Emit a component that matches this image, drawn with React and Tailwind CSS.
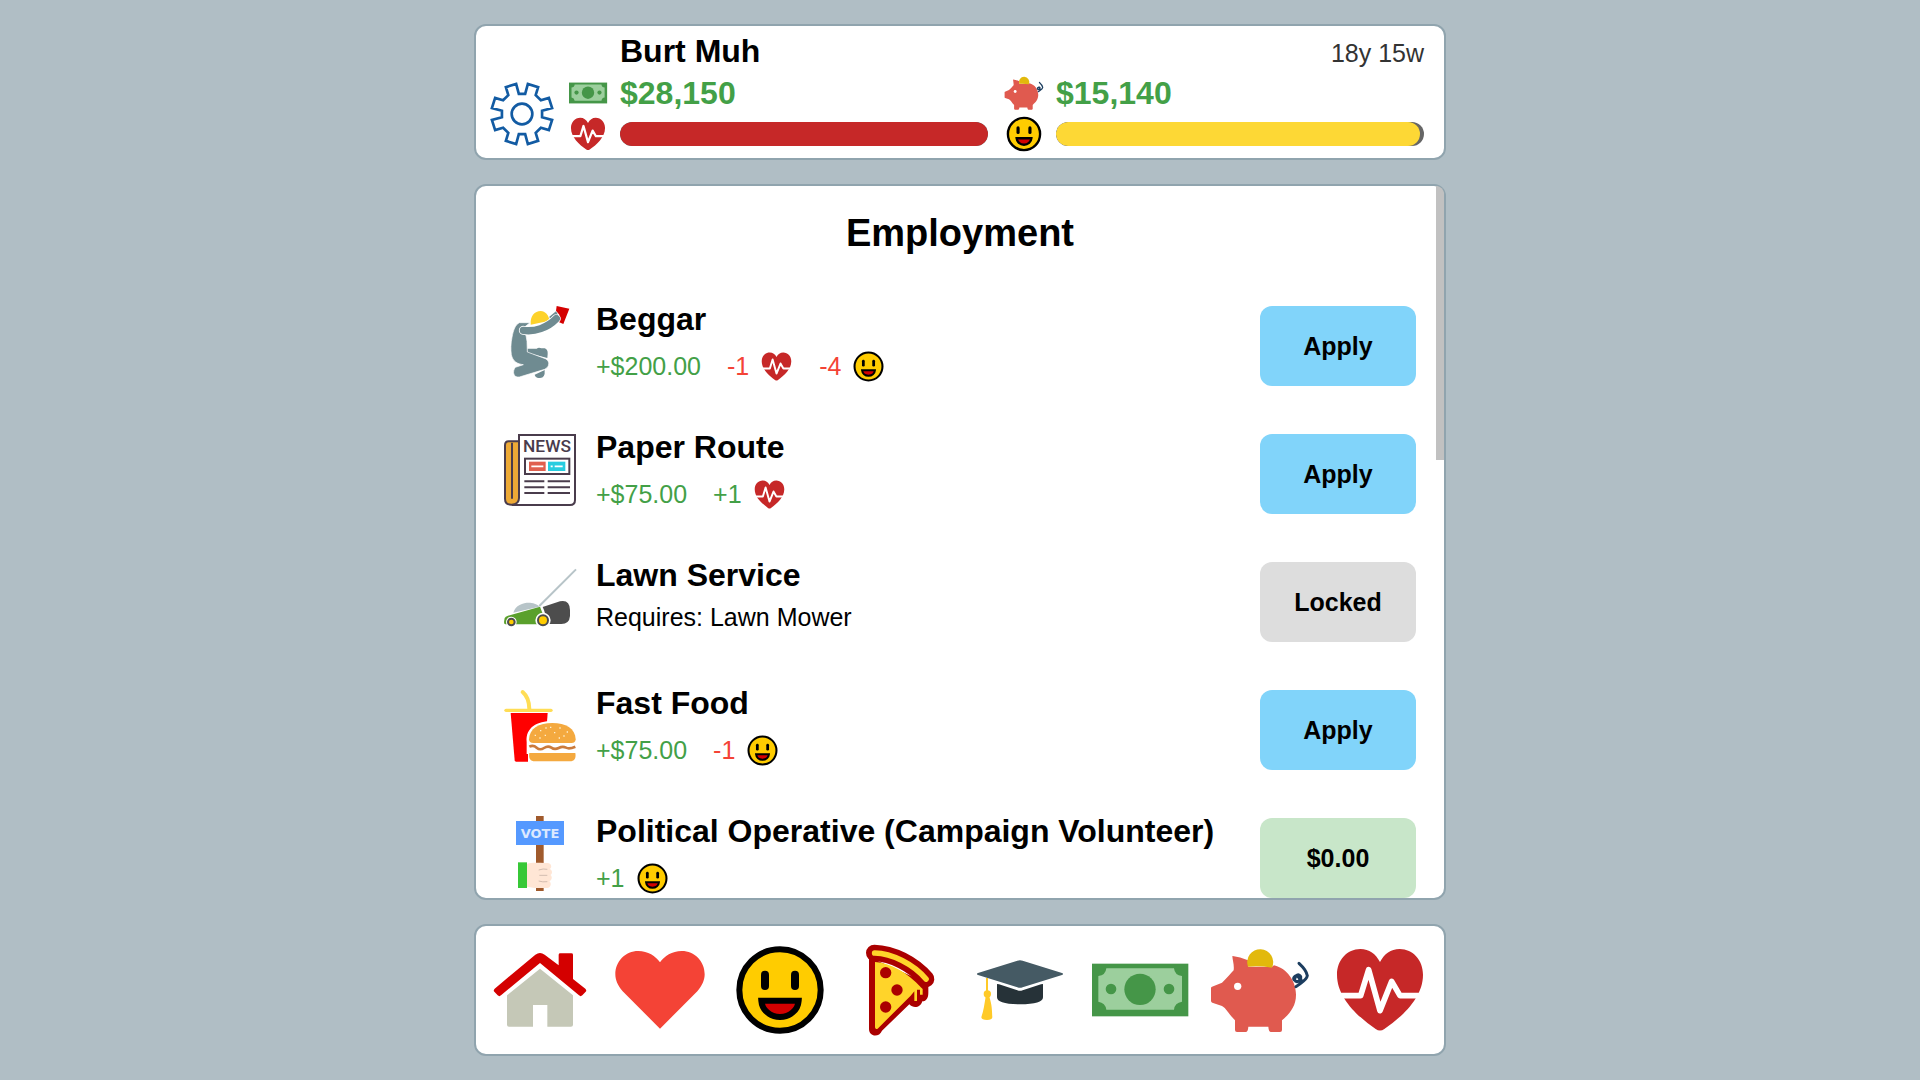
import React from 'react';

const Icon = ({ className, size = 288, children }) => (
  <svg viewBox={`0 0 ${size} ${size}`} className={`shrink-0 overflow-visible ${className}`} aria-hidden="true">
    {children}
  </svg>
);

const HomeIcon = ({ className }) => (
  <Icon className={className}>
    <path
      d="M8 140 L130 38 Q144 28 158 38 L200 70 V38 Q200 34 205 34 H238 Q243 34 243 38 V111 L280 140 Q285 145 281 149 L271 160 Q266 165 261 160 L144 63 L27 160 Q22 165 17 160 L7 149 Q3 145 8 140Z"
      fill="#d40000"
    />
    <path d="M144 80 L243 160 V248 Q243 254 237 254 H166 V189 H123 V254 H51 Q45 254 45 248 V160Z" fill="#c5c8b7" />
  </Icon>
);

const HeartIcon = ({ className }) => (
  <Icon className={className}>
    <path
      d="M144 260 L32 148 C16 130 10 112 10 97 C10 58 40 27 79 27 C108 27 131 42 144 61 C157 42 180 27 209 27 C248 27 278 58 278 97 C278 112 272 130 256 148Z"
      fill="#f44336"
    />
  </Icon>
);

const SmileIcon = ({ className }) => (
  <Icon className={className}>
    <circle cx="144" cy="144" r="122" fill="#ffcc00" stroke="#000" strokeWidth="18" />
    <rect x="87" y="86" width="24" height="58" rx="12" />
    <rect x="177" y="86" width="24" height="58" rx="12" />
    <path d="M88 176 H200 C198 204 174 225 144 225 S90 204 88 176Z" fill="#d40000" stroke="#000" strokeWidth="18" />
  </Icon>
);

const PizzaIcon = ({ className }) => (
  <Icon className={className}>
    <path
      d="M51 45 V261 C51 285 82 287 90 266 L172 187 C184 201 206 197 211 178 C224 177 229 167 229 152 V125Z"
      fill="#aa0000"
    />
    <path d="M67 33 C120 34 184 66 222 111" fill="none" stroke="#aa0000" strokeWidth="50" strokeLinecap="round" />
    <path d="M68 33 C120 34 184 66 222 111" fill="none" stroke="#ffd42a" strokeWidth="17" strokeLinecap="round" />
    <path
      d="M69 60 C120 64 165 92 208 137 L212 141 V158 H204 V143 L195 143 V177 H187 V148 L176 161 L77 260 Q70 264 69 256Z"
      fill="#ffd42a"
    />
    <g fill="#aa0000">
      <circle cx="101" cy="92" r="17" />
      <circle cx="135" cy="144" r="17" />
      <circle cx="101" cy="195" r="17" />
    </g>
  </Icon>
);

const GradCapIcon = ({ className }) => (
  <Icon className={className}>
    <path d="M18 93 L136 56 Q144 53 152 56 L270 93 Q277 96 270 99 L152 136 Q144 139 136 136 L18 99 Q11 96 18 93Z" fill="#455a64" />
    <path d="M75 126 L81 127 L136 145 Q144 148 152 145 L207 127 L213 126 V166 C213 180 190 187 144 187 S75 180 75 166Z" fill="#263238" />
    <path d="M45 108 V150" stroke="#ffca28" strokeWidth="6" />
    <circle cx="46" cy="156" r="11" fill="#ffca28" />
    <path d="M41 164 H52 C60 188 60 206 61 226 Q60 234 45 234 Q29 234 28 226 C35 205 37 188 41 164Z" fill="#ffca28" />
  </Icon>
);

const CashIcon = ({ className }) => (
  <Icon className={className}>
    <rect x="0" y="65" width="289" height="158" fill="#459648" />
    <path
      d="M43 79 H246 Q248 100 270 102 V179 Q248 182 246 203 H43 Q40 182 19 179 V102 Q41 100 43 79Z"
      fill="#9ccf9d"
    />
    <circle cx="144" cy="142" r="47" fill="#459648" />
    <circle cx="57" cy="141" r="16" fill="#459648" />
    <circle cx="231" cy="141" r="16" fill="#459648" />
  </Icon>
);

const PiggyIcon = ({ className }) => (
  <Icon className={className}>
    <path
      d="M62 42 Q84 44 108 55 V74 H180 L186 70 C226 80 252 118 252 158 C252 192 234 214 210 235 V264 Q210 270 204 270 H177 Q170 270 169 254 H109 Q108 270 101 270 H75 Q69 270 69 264 V235 C50 216 44 200 30 192 L1 182 Q-3 180 -3 176 V138 Q-3 135 0 134 L30 122 C46 108 56 94 65 85 C67 68 62 56 61 43Z"
      fill="#e05a4f"
    />
    <path d="M108 74 A39 39 0 1 1 180 77 Q144 71 108 74Z" fill="#e2b90c" />
    <circle cx="77" cy="133" r="11" fill="#fff" />
    <path
      d="M261 64 C272 74 284 90 286 101 C284 116 266 122 252 134 M248 114 C248 98 262 94 266 104 C268 116 254 124 247 114 C240 108 252 96 260 106 C268 114 270 116 268 122"
      fill="none"
      stroke="#1c3d5f"
      strokeWidth="9"
      strokeLinecap="round"
    />
  </Icon>
);

const HealthIcon = ({ className }) => (
  <Icon className={className}>
    <path
      d="M144 60 C131 36 112 21 85 21 C45 21 15 55 15 98 C15 168 78 224 131 261 Q144 270 157 261 C210 224 273 168 273 98 C273 55 243 21 203 21 C176 21 157 36 144 60Z"
      fill="#c62828"
    />
    <path
      d="M6 161 H86 L110 83 L144 206 L179 118 L204 161 H282"
      fill="none"
      stroke="#fff"
      strokeWidth="17"
      strokeLinejoin="round"
    />
  </Icon>
);

// notches between the teeth: deep ones on the axes, shallower on the diagonals
const notches = [
  [[-11, 92], [-9, 61], [9, 61], [11, 92]],
  [[-14, 94], [-9, 70], [9, 70], [14, 94]],
];

const gearPoints = Array.from({ length: 8 })
  .flatMap((_, k) => notches[k % 2].map(([offset, r]) => {
    const a = ((k * 45 + offset) * Math.PI) / 180;
    return `${(96 + r * Math.sin(a)).toFixed(1)},${(96 - r * Math.cos(a)).toFixed(1)}`;
  }))
  .join(' ');

const GearIcon = ({ className }) => (
  <Icon className={className} size={192}>
    <g fill="none" stroke="#125ba3" strokeWidth="8">
      <polygon points={gearPoints} />
      <circle cx="96" cy="96" r="31" />
    </g>
  </Icon>
);

const BeggarIcon = ({ className }) => (
  <Icon className={className} size={216}>
    <path d="M70 128 H98 Q104 123 112 127 H122 Q132 130 131 144 L130 156 L70 140Z" fill="#6f8b91" />
    <path d="M92 206 L122 192 Q124 216 108 216 Q94 216 92 206Z" fill="#6f8b91" />
    <path
      d="M78 50 H46 C34 56 28 72 24 94 C20 112 20 132 22 146 C26 166 40 174 58 176 L34 184 C24 196 28 216 46 213 L122 190 C138 182 138 164 124 158 L70 138 L69 106 L66 88 L46 76Z"
      fill="#6f8b91"
      stroke="#fff"
      strokeWidth="2"
    />
    <path d="M138 38 L136 32 L156 16 L166 34Z" fill="#6f8b91" />
    <path d="M80 56 C78 30 92 15 110 15 C124 15 134 28 137 44Z" fill="#fdd22b" />
    <path d="M158 0 L196 8 L178 54 L164 48 L166 26 L156 14Z" fill="#d40000" />
    <path d="M58 73 C92 78 130 66 157 38" fill="none" stroke="#fff" strokeWidth="27" strokeLinecap="round" />
    <path d="M58 73 C92 78 130 66 157 38" fill="none" stroke="#6f8b91" strokeWidth="22" strokeLinecap="round" />
  </Icon>
);

const NewspaperIcon = ({ className }) => (
  <Icon className={className} size={216}>
    <g fill="none" stroke="#4a3c4c" strokeWidth="6">
      <path d="M45 22 H14 Q3 22 3 34 V194 Q3 212 22 212 H45" fill="#eda936" />
      <path d="M24 26 V194" />
      <path d="M45 3 H213 V198 Q213 213 198 213 H24 Q45 210 45 192Z" fill="#fff" />
      <rect x="63" y="74" width="133" height="46" />
      <path d="M61 142 H121 M131 142 H198 M61 160 H121 M131 160 H198 M61 177 H121 M131 177 H198" />
    </g>
    <text x="129" y="55" textAnchor="middle" fontSize="52" fontWeight="500" fontFamily="Roboto, sans-serif" fill="#4a3c4c">
      NEWS
    </text>
    <rect x="75" y="83" width="50" height="28" fill="#e0604f" />
    <rect x="132" y="83" width="52" height="28" fill="#27cde0" />
    <path d="M82 97 H118 M140 97 H146 M152 97 H176" stroke="#fff" strokeWidth="5" />
  </Icon>
);

const MowerIcon = ({ className }) => (
  <Icon className={className} size={216}>
    <path d="M216 22 L106 132" stroke="#b7c4c8" strokeWidth="6" />
    <path d="M28 152 C34 128 60 121 78 122 C92 123 102 128 106 134Z" fill="#b7c4c8" />
    <path d="M0 180 L2 168 Q4 164 12 161 L108 134 L122 170 L114 187 H4 Q0 187 0 180Z" fill="#5aa02c" />
    <path d="M116 135 L168 118 Q197 112 198 144 V162 Q196 186 172 186 H130 Q124 150 116 135Z" fill="#4d4d4d" />
    <g fill="#ffcc00" stroke="#4d4d4d" strokeWidth="6">
      <circle cx="22" cy="180" r="13" stroke="#fff" />
      <circle cx="117" cy="175" r="19" stroke="#fff" strokeWidth="8" />
      <circle cx="22" cy="180" r="10" />
      <circle cx="117" cy="175" r="15" />
    </g>
  </Icon>
);

const FastFoodIcon = ({ className }) => (
  <Icon className={className} size={216}>
    <path d="M56 6 C70 18 76 34 76 58" fill="none" stroke="#ffdd55" strokeWidth="12" strokeLinecap="round" />
    <path d="M6 61 H141" stroke="#ffdd55" strokeWidth="10" strokeLinecap="round" />
    <path d="M20 69 H131 L120 215 H36 Q33 215 32 211Z" fill="#ff0000" />
    <path d="M68 156 C64 112 100 93 145 93 S222 115 220 150 V216 H72 V192 H68Z" fill="#fff" />
    <path d="M75 148 C76 115 105 99 145 99 S214 115 215 148 Q215 159 202 159 H88 Q75 159 75 148Z" fill="#f4a93f" />
    <path d="M76 189 H214 C217 206 210 214 198 214 H92 C80 214 73 206 76 189Z" fill="#f4a93f" />
    <path
      d="M76 170 Q88 164 98 173 T120 174 T142 173 T164 174 T186 173 T214 170"
      fill="none"
      stroke="#cb7b3c"
      strokeWidth="8"
    />
    <path
      d="M92 136 h4 M108 122 h4 M122 136 h4 M138 112 h4 M150 128 h4 M166 114 h4 M178 138 h4 M188 126 h4 M106 144 h4 M164 144 h4 M124 114 h4"
      stroke="#fff0d0"
      strokeWidth="4"
    />
  </Icon>
);

const VoteIcon = ({ className }) => (
  <Icon className={className} size={216}>
    <rect x="96" y="-6" width="23" height="225" fill="#a05a2c" />
    <rect x="36" y="9" width="144" height="72" fill="#5599ff" />
    <text x="108" y="61" textAnchor="middle" fontSize="39" fontWeight="700" fontFamily="'DejaVu Sans', sans-serif" fill="#dce9ff">
      VOTE
    </text>
    <rect x="42" y="133" width="27" height="77" fill="#37c837" />
    <path
      d="M69 138 C84 132 110 136 132 135 C144 137 144 151 137 153 C146 156 146 168 139 171 C146 175 144 187 136 190 C144 196 140 210 130 210 H92 L69 206Z"
      fill="#ffe6d5"
    />
    <path d="M104 156 Q118 151 130 154 M106 172 H130 M104 189 Q116 193 130 191" fill="none" stroke="#d3bdb0" strokeWidth="3" />
  </Icon>
);

const effectIcons = { health: HealthIcon, happy: SmileIcon };

const jobs = [
  {
    name: 'Beggar',
    icon: BeggarIcon,
    effects: [{ text: '+$200.00' }, { text: '-1', icon: 'health' }, { text: '-4', icon: 'happy' }],
    action: 'Apply',
    kind: 'apply',
  },
  {
    name: 'Paper Route',
    icon: NewspaperIcon,
    effects: [{ text: '+$75.00' }, { text: '+1', icon: 'health' }],
    action: 'Apply',
    kind: 'apply',
  },
  { name: 'Lawn Service', icon: MowerIcon, requires: 'Lawn Mower', action: 'Locked', kind: 'locked' },
  {
    name: 'Fast Food',
    icon: FastFoodIcon,
    effects: [{ text: '+$75.00' }, { text: '-1', icon: 'happy' }],
    action: 'Apply',
    kind: 'apply',
  },
  {
    name: 'Political Operative (Campaign Volunteer)',
    icon: VoteIcon,
    effects: [{ text: '+1', icon: 'happy' }],
    action: '$0.00',
    kind: 'cost',
  },
];

const buttonColors = {
  apply: 'bg-[#81d4fa]',
  locked: 'bg-[#dddddd]',
  cost: 'bg-[#c8e6c9]',
};

const navItems = [
  { label: 'Home', icon: HomeIcon },
  { label: 'Relationships', icon: HeartIcon },
  { label: 'Happiness', icon: SmileIcon },
  { label: 'Food', icon: PizzaIcon },
  { label: 'Education', icon: GradCapIcon },
  { label: 'Employment', icon: CashIcon },
  { label: 'Bank', icon: PiggyIcon },
  { label: 'Health', icon: HealthIcon },
];

const Bar = ({ label, value, color }) => (
  <div
    role="progressbar"
    aria-label={label}
    aria-valuenow={value}
    className="h-6 rounded-full bg-[#666666] overflow-hidden"
  >
    <div className={`h-full rounded-full ${color}`} style={{ width: `${value}%` }} />
  </div>
);

const Stat = ({ moneyIcon: MoneyIcon, amount, barIcon: BarIcon, children }) => (
  <div className="flex-1 grid grid-cols-[38px_1fr] grid-rows-[42px_40px] gap-x-[13px] items-center">
    <MoneyIcon className="w-[38px] h-[38px]" />
    <span className="text-[32px] leading-[42px] font-bold text-[#43a047]">{amount}</span>
    <BarIcon className="w-[38px] h-[38px]" />
    {children}
  </div>
);

const Header = () => (
  <header className="flex items-end gap-[13px] bg-white border-2 border-[#90a4ae] rounded-xl pl-3 pr-5 py-1">
    <button type="button" aria-label="Settings" className="mb-2 mx-0.5">
      <GearIcon className="w-16 h-16" />
    </button>
    <div className="flex-1">
      <div className="flex items-center justify-between pl-[51px]">
        <h2 className="text-[32px] leading-[42px] font-bold">Burt Muh</h2>
        <span className="pt-1 text-[25px] leading-[34px] text-[#333333]">18y 15w</span>
      </div>
      <div className="flex gap-[17px]">
        <Stat moneyIcon={CashIcon} amount="$28,150" barIcon={HealthIcon}>
          <Bar label="Health" value={100} color="bg-[#c62828]" />
        </Stat>
        <Stat moneyIcon={PiggyIcon} amount="$15,140" barIcon={SmileIcon}>
          <Bar label="Happiness" value={99} color="bg-[#fdd835]" />
        </Stat>
      </div>
    </div>
  </header>
);

const Effect = ({ text, icon }) => {
  const EffectIcon = effectIcons[icon];
  return (
    <span className="flex items-center gap-[11px]">
      <span className={text.startsWith('-') ? 'text-[#f44336]' : 'text-[#43a047]'}>{text}</span>
      {EffectIcon && <EffectIcon className="w-[33px] h-[33px]" />}
    </span>
  );
};

const JobRow = ({ job }) => {
  const JobIcon = job.icon;
  return (
    <li className="flex items-start h-32">
      <JobIcon className="w-18 h-18 mt-2" />
      <div className="flex-1 ml-5">
        <h3 className="text-[32px] leading-[42px] font-bold">{job.name}</h3>
        {job.requires ? (
          <p className="mt-1 text-[25px] leading-[34px]">Requires: {job.requires}</p>
        ) : (
          <div className="mt-1 h-11 flex items-center gap-[26px] text-[25px] leading-[34px]">
            {job.effects.map((effect) => (
              <Effect key={effect.text} {...effect} />
            ))}
          </div>
        )}
      </div>
      <button
        type="button"
        disabled={job.kind === 'locked'}
        className={`mt-2 w-39 h-20 pt-0.5 rounded-xl text-[25px] font-bold ${buttonColors[job.kind]}`}
      >
        {job.action}
      </button>
    </li>
  );
};

const Employment = () => (
  <main className="relative flex-1 min-h-0 flex flex-col bg-white border-2 border-[#90a4ae] rounded-xl">
    <div className="flex-1 min-h-0 overflow-y-auto [scrollbar-width:none] rounded-[10px] px-7">
      <h1 className="pt-6 mb-[42px] text-[38px] leading-[46px] font-bold text-center">Employment</h1>
      <ul>
        {jobs.map((job) => (
          <JobRow key={job.name} job={job} />
        ))}
      </ul>
    </div>
    <div className="absolute top-0 right-0 w-2 h-[38.5%] bg-[#c1c1c1] rounded-tr-lg" />
  </main>
);

const Nav = () => (
  <nav className="grid grid-cols-8 bg-white border-2 border-[#90a4ae] rounded-xl px-1 py-4">
    {navItems.map(({ label, icon: NavIcon }) => (
      <button key={label} type="button" aria-label={label} className="flex justify-center">
        <NavIcon className="w-24 h-24" />
      </button>
    ))}
  </nav>
);

const App = () => (
  <div className="h-screen bg-[#b0bec5] font-['Liberation_Sans',Arial,sans-serif] text-black">
    <div className="h-full max-w-[972px] mx-auto py-6 flex flex-col gap-6">
      <Header />
      <Employment />
      <Nav />
    </div>
  </div>
);

export default App;
